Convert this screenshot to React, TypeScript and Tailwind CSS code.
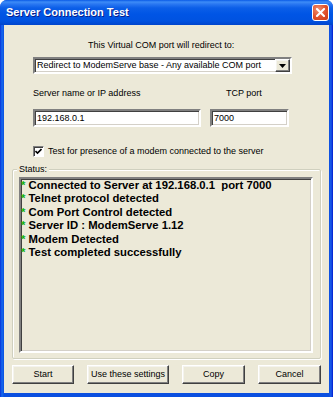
const sunken =
  "border-2 border-t-[#808080] border-l-[#808080] border-b-white border-r-white shadow-[inset_1px_1px_0_#404040,inset_-1px_-1px_0_#d4d0c8]";

const raised =
  "border border-t-white border-l-white border-b-[#404040] border-r-[#404040] shadow-[inset_-1px_-1px_0_#808080,inset_1px_1px_0_#f4f3ee]";

const statusLines = [
  "Connected to Server at 192.168.0.1\u00a0\u00a0port 7000",
  "Telnet protocol detected",
  "Com Port Control detected",
  "Server ID : ModemServe 1.12",
  "Modem Detected",
  "Test completed successfully",
];

function DialogButton({ label, width }: { label: string; width: string }) {
  return (
    <button
      className={`${raised} ${width} flex h-[19px] items-center justify-center bg-[#ece9d8] text-[9px] leading-none text-black`}
    >
      {label}
    </button>
  );
}

export default function App() {
  return (
    <div className="h-[397px] w-[333px] bg-white font-['Liberation_Sans',Arial,sans-serif] text-[9px] text-black">
      <div className="flex h-full flex-col overflow-hidden rounded-t-[7px] bg-[linear-gradient(90deg,#0831d9_0px,#166aee_2px,#0a4fe0_4px,#0a4fe0_calc(100%-4px),#1a5ae8_calc(100%-2px),#0019cf_100%)] px-[4px] pb-[4px]">
        {/* title bar */}
        <div className="-mx-[4px] flex h-[25px] shrink-0 items-center justify-between bg-[linear-gradient(180deg,#0a5ae6_0px,#3d8cf7_2px,#2a78f2_4px,#0b5ee8_8px,#0055e5_14px,#0052e0_21px,#0045cc_25px)] pl-[6px] pr-[4px]">
          <span className="text-[11px] font-bold text-white [text-shadow:1px_1px_0_#0a1e8a]">
            Server Connection Test
          </span>
          <div className="flex h-[17px] w-[17px] items-center justify-center rounded-[3px] border border-white bg-[radial-gradient(circle_at_35%_30%,#f09070,#e0502a_55%,#c83c18)]">
            <svg width="9" height="9" viewBox="0 0 9 9">
              <path d="M1 1 L8 8 M8 1 L1 8" stroke="white" strokeWidth="2" strokeLinecap="square" />
            </svg>
          </div>
        </div>

        {/* body */}
        <div className="flex flex-1 flex-col bg-[#ece9d8] pt-[15px]">
          <div className="pl-[84px] leading-[11px]">This Virtual COM port will redirect to:</div>

          <div className={`${sunken} ml-[29px] mt-[6px] flex h-[17px] w-[259px] items-center bg-white`}>
            <span className="flex-1 pl-[2px] leading-none">
              Redirect to ModemServe base - Any available COM port
            </span>
            <div className={`${raised} flex h-[13px] w-[15px] items-center justify-center bg-[#ece9d8]`}>
              <svg width="7" height="4" viewBox="0 0 7 4">
                <path d="M0 0 H7 L3.5 4 Z" fill="black" />
              </svg>
            </div>
          </div>

          <div className="ml-[29px] mt-[14px] flex leading-[11px]">
            <span className="w-[193px]">Server name or IP address</span>
            <span>TCP port</span>
          </div>

          <div className="ml-[29px] mt-[10px] flex gap-[9px]">
            <div className={`${sunken} flex h-[18px] w-[168px] items-center bg-white pl-[2px] leading-none`}>
              192.168.0.1
            </div>
            <div className={`${sunken} flex h-[18px] w-[79px] items-center bg-white pl-[2px] leading-none`}>
              7000
            </div>
          </div>

          <div className="ml-[29px] mt-[19px] flex items-center gap-[4px]">
            <div className="flex h-[11px] w-[11px] items-center justify-center border border-t-[#808080] border-l-[#808080] border-b-white border-r-white bg-white shadow-[inset_1px_1px_0_#404040]">
              <svg width="7" height="7" viewBox="0 0 7 7">
                <path d="M0.5 3 L2.5 5 L6.5 1" stroke="black" strokeWidth="1.6" fill="none" />
              </svg>
            </div>
            <span className="leading-[11px]">Test for presence of a modem connected to the server</span>
          </div>

          {/* status group */}
          <div className="relative ml-[8px] mt-[12px] h-[190px] w-[309px] rounded-[2px] border border-[#d0d0bf] pl-[6px] pt-[7px] shadow-[inset_1px_1px_0_white,1px_1px_0_white]">
            <span className="absolute -top-[6px] left-[4px] bg-[#ece9d8] px-[2px] leading-[11px]">Status:</span>
            <div className={`${sunken} h-[176px] w-[294px] bg-[#ece9d8]`}>
              {statusLines.map((line) => (
                <div key={line} className="whitespace-nowrap text-[11.3px] font-bold leading-[13.4px]">
                  <span className="text-[#10b010]">*</span> {line}
                </div>
              ))}
            </div>
          </div>

          <div className="ml-[8px] mt-[6px] flex gap-[13px]">
            <DialogButton label="Start" width="w-[62px]" />
            <DialogButton label="Use these settings" width="w-[82px]" />
            <DialogButton label="Copy" width="w-[63px]" />
            <DialogButton label="Cancel" width="w-[63px]" />
          </div>
        </div>
      </div>
    </div>
  );
}
